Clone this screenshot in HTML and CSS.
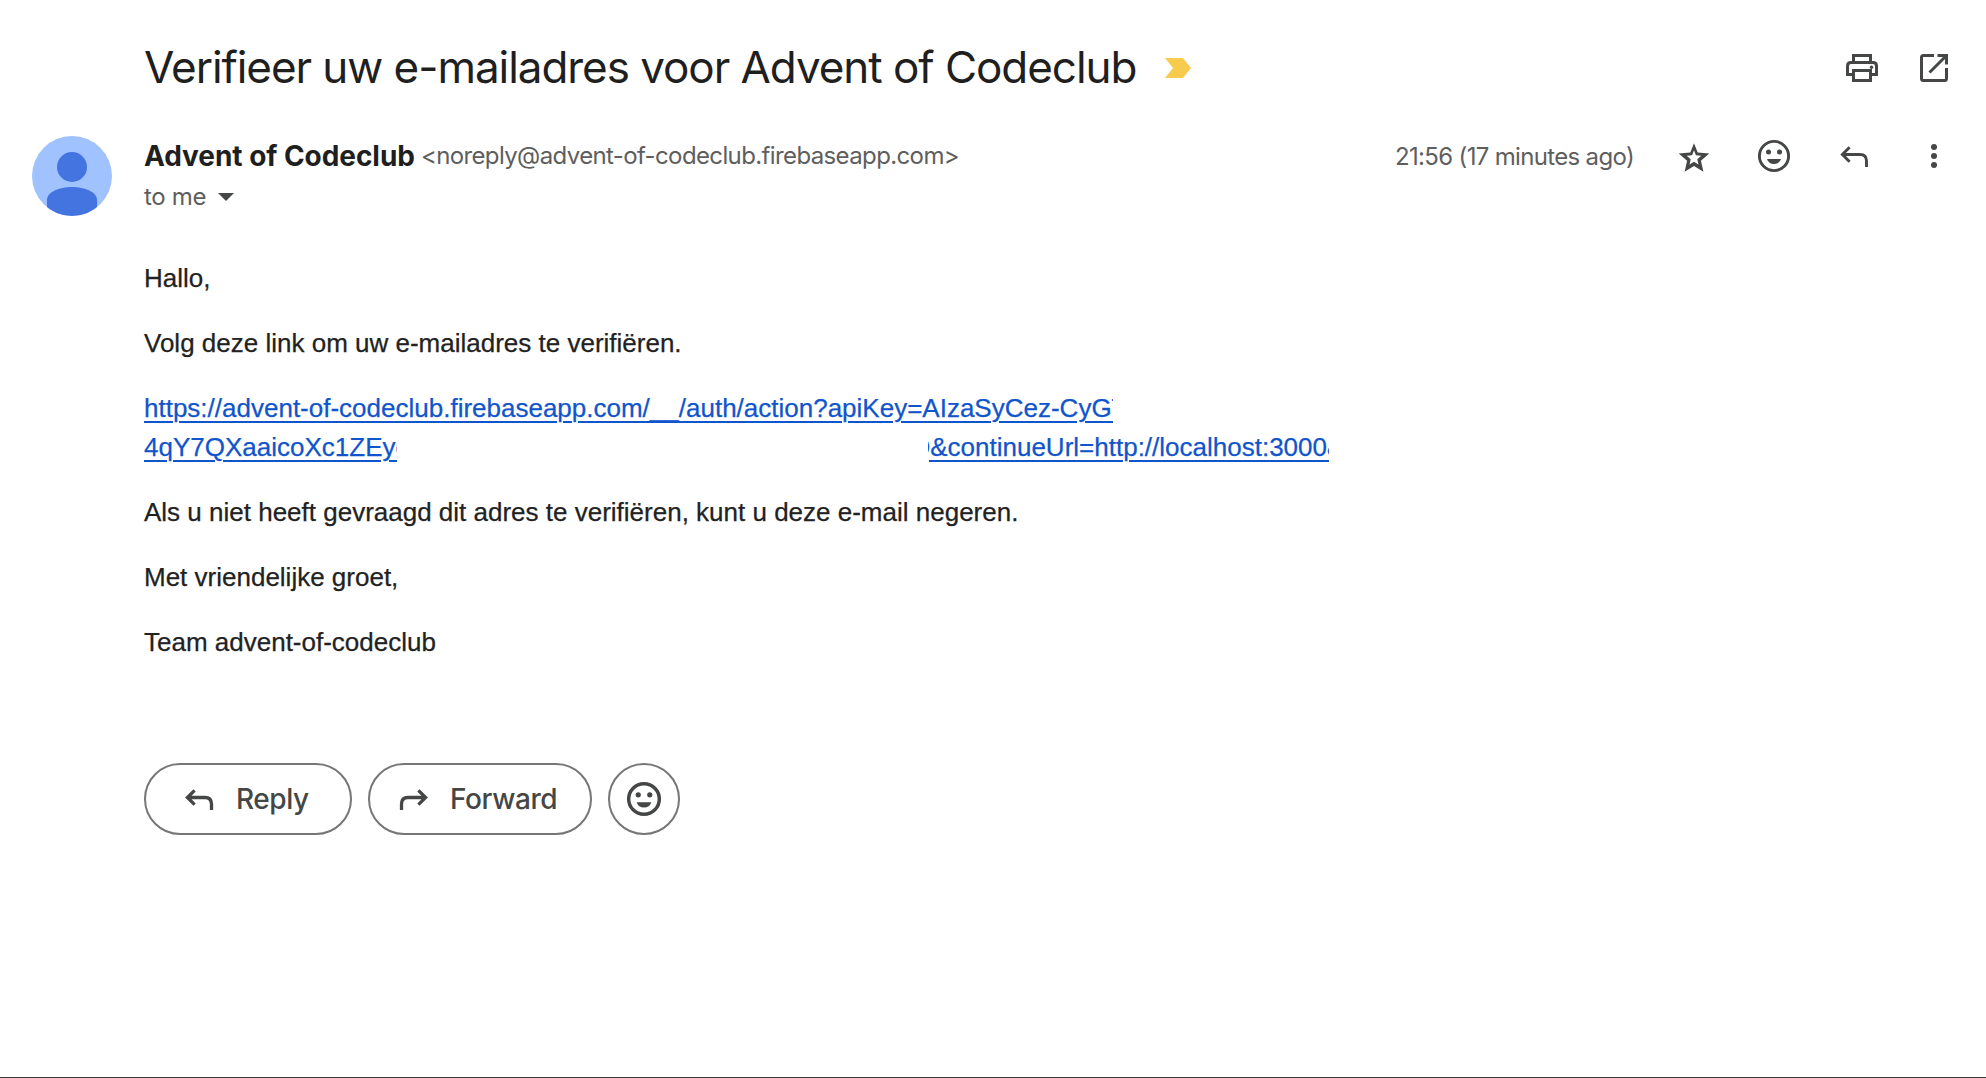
FILE: index.html
```
<!DOCTYPE html>
<html lang="nl">
<head>
<meta charset="utf-8">
<title>Verifieer uw e-mailadres voor Advent of Codeclub</title>
<link rel="stylesheet" href="styles.css">
</head>
<body>
<svg class="sprite" aria-hidden="true">
  <symbol id="smile" viewBox="0 0 40 40">
    <circle cx="20" cy="20" r="14.6" fill="none" stroke="currentColor" class="stroke"/>
    <circle cx="14.5" cy="16" r="2.5"/><circle cx="25.5" cy="16" r="2.5"/>
    <path d="M13 23h14q-1.7 5-7 5t-7-5z"/>
  </symbol>
  <symbol id="reply" viewBox="0 0 40 40">
    <path fill="none" stroke="currentColor" class="stroke" d="M15.6 11.3 8.4 18.5l7.2 7.2M8.4 18.5H26q6.500 0 6.500 6.500v6"/>
  </symbol>
</svg>
<main class="message">
  <header class="subject-row">
    <h1 class="subject">Verifieer uw e-mailadres voor Advent of Codeclub</h1>
    <svg class="important" viewBox="0 0 26 20"><path d="M0 0h18l8 10-8 10H0l8-10z"/></svg>
    <div class="tools">
      <svg class="icon" viewBox="0 0 40 40"><g fill="none" stroke="currentColor" stroke-width="3"><path d="M11.500 15V7.500h17V15"/><path d="M11.500 26.500H5.500V18q0-3.500 3.500-3.500h22q3.500 0 3.500 3.500v8.500h-6"/><path d="M11.500 22.500h17v10h-17z"/></g><circle cx="29.500" cy="19.300" r="1.700"/></svg>
      <svg class="icon" viewBox="0 0 40 40"><g fill="none" stroke="currentColor" stroke-width="3"><path d="M20 7.500H9.500q-2 0-2 2v21q0 2 2 2h21q2 0 2-2V20"/><path d="M23.500 7.500h9v9M32.500 7.500 15.500 24.500"/></g></svg>
    </div>
  </header>
  <section class="sender-row">
    <svg class="avatar" viewBox="0 0 80 80"><defs><clipPath id="disc"><circle cx="40" cy="40" r="40"/></clipPath></defs><g clip-path="url(#disc)"><path fill="#a0c2ff" d="M0 0h80v80H0z"/><circle cx="40" cy="31" r="15" fill="#4374e0"/><path fill="#4374e0" d="M15 80V64c0-8 12-13 25-13s25 5 25 13v16z"/></g></svg>
    <div class="sender">
      <div class="from"><span class="name">Advent of Codeclub</span><span class="email">&lt;noreply@advent-of-codeclub.firebaseapp.com&gt;</span></div>
      <div class="to"><span>to me</span><svg class="caret" viewBox="0 0 16 8"><path d="M0 0h16L8 8z"/></svg></div>
    </div>
    <div class="meta">
      <span class="time">21:56 (17 minutes ago)</span>
      <svg class="icon" viewBox="0 0 40 40"><path fill-rule="evenodd" d="M20 7.300l3.700 9.200 11.600 1-8.400 7.200 2.500 11.100L20 29.900l-9.400 5.900 2.500-11.100-8.400-7.200 11.600-1zM20 14.300l-1.900 5-5.400.4 4 3.600-1.200 5.200 4.500-2.800 4.500 2.800-1.200-5.200 4-3.600-5.400-.4z"/></svg>
      <svg class="icon"><use href="#smile"/></svg>
      <svg class="icon"><use href="#reply"/></svg>
      <svg class="icon" viewBox="0 0 40 40"><circle cx="20" cy="11" r="3"/><circle cx="20" cy="20" r="3"/><circle cx="20" cy="29" r="3"/></svg>
    </div>
  </section>
  <article class="body">
    <p>Hallo,</p>
    <p>Volg deze link om uw e-mailadres te verifiëren.</p>
    <p class="link">
      <span class="line"><a class="cut cut-key">https://advent-of-codeclub.firebaseapp.com/__/auth/action?apiKey=AIzaSyCez-CyGT</a></span>
      <span class="line"><a class="cut cut-code">4qY7QXaaicoXc1ZEyc</a><a class="cut cut-url">Q&amp;continueUrl=http://localhost:3000&amp;</a></span>
    </p>
    <p>Als u niet heeft gevraagd dit adres te verifiëren, kunt u deze e-mail negeren.</p>
    <p>Met vriendelijke groet,</p>
    <p>Team advent-of-codeclub</p>
  </article>
  <footer class="actions">
    <button class="pill reply"><svg class="icon"><use href="#reply"/></svg>Reply</button>
    <button class="pill forward"><svg class="icon flip"><use href="#reply"/></svg>Forward</button>
    <button class="pill react"><svg class="icon"><use href="#smile"/></svg></button>
  </footer>
</main>
</body>
</html>
```
FILE: styles.css
```
* { box-sizing: border-box; }
body {
  margin: 0;
  background: #fff;
  color: #1f1f1f;
  font-family: Inter, sans-serif;
}
.sprite { position: absolute; width: 0; height: 0; }
.stroke { stroke-width: var(--stroke, 2.9px); }
.message {
  height: 1078px;
  overflow: hidden;
  padding: 28px 32px 0;
  border-bottom: 1px solid #3b3836;
}
.icon {
  width: 40px;
  height: 40px;
  flex: none;
  color: #444746;
  fill: currentColor;
}
.subject-row {
  display: flex;
  align-items: center;
  height: 80px;
  padding-left: 112px;
}
.subject {
  margin: 0;
  padding-bottom: 3px;
  font-size: 44px;
  font-weight: 400;
  line-height: 56px;
  letter-spacing: -1.05px;
  white-space: nowrap;
}
.important { width: 26px; height: 20px; margin-left: 29px; fill: #f7cb4d; }
.tools { display: flex; gap: 32px; margin-left: auto; }
.sender-row { display: flex; height: 80px; margin-top: 28px; }
.avatar { width: 80px; height: 80px; margin-right: 32px; flex: none; }
.from, .to {
  display: flex;
  height: 40px;
  line-height: 40px;
  font-size: 24px;
  color: #5e5e5e;
  white-space: nowrap;
}
.name { font-size: 28px; font-weight: 700; color: #1f1f1f; letter-spacing: -.05px; }
.email { margin-left: 6px; letter-spacing: -.62px; }
.to { align-items: center; letter-spacing: -.3px; }
.to span { padding-top: 1px; }
.caret { width: 16px; height: 8px; margin: 2px 0 0 12px; fill: #444746; }
.meta { display: flex; align-items: center; gap: 40px; height: 40px; margin-left: auto; }
.time { font-size: 24px; letter-spacing: -.67px; color: #5e5e5e; white-space: nowrap; }
.body {
  padding: 43px 0 0 112px;
  font: 26px/39px "Liberation Sans", Arial, sans-serif;
  color: #222;
  -webkit-text-stroke: .25px;
}
.body p { margin: 0 0 26px; }
.line { display: flex; height: 39px; }
.cut {
  overflow: hidden;
  white-space: nowrap;
  color: #1155cc;
  text-decoration: underline;
  text-decoration-thickness: 2px;
  text-underline-offset: 4px;
}
.cut-key { width: 969px; }
.cut-code { width: 253px; }
.cut-url { width: 401px; margin-left: 531px; text-indent: -18px; }
.actions { display: flex; gap: 16px; margin-top: 101px; padding-left: 112px; }
.body p:last-child { margin-bottom: 0; }
.pill {
  --stroke: 3.3px;
  display: flex;
  align-items: center;
  gap: 18px;
  height: 72px;
  padding: 0;
  border: 2px solid #747775;
  border-radius: 36px;
  background: #fff;
  color: #444746;
  font: 500 28px Inter, sans-serif;
  letter-spacing: -.42px;
}
.reply { width: 208px; padding-left: 33px; gap: 17px; }
.forward { width: 224px; padding-left: 24px; gap: 16px; }
.react { width: 72px; justify-content: center; }
.react .icon { width: 42px; height: 42px; }
.flip { transform: scaleX(-1); }
```
